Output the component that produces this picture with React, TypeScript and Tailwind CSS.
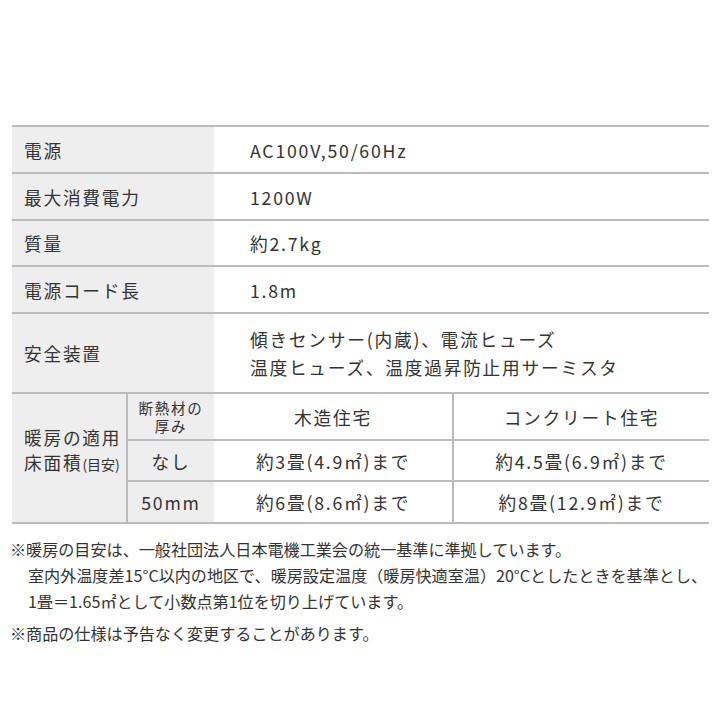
import React from "react";

const font = { fontFamily: '"Noto Sans CJK JP", "Noto Sans", sans-serif' };

function Row({ label, children, h }: { label: string; children: React.ReactNode; h: string }) {
  return (
    <div className={`flex border-b-2 border-[#bcbcbc] ${h}`}>
      <div className="w-[202px] shrink-0 bg-[#eeeeee] flex items-center pl-[12px]">{label}</div>
      <div className="flex-1 flex flex-col justify-center pl-[36px]">{children}</div>
    </div>
  );
}

export default function App() {
  return (
    <div className="w-[720px] h-[720px] bg-white text-[#333333] overflow-hidden" style={font}>
      <div className="pt-[125px] pl-[12px]">
        <div className="w-[697px] border-t-2 border-[#bcbcbc] text-[17.7px] tracking-[0.1em] leading-[28px]">
          <Row label="電源" h="h-[47px]">AC100V,50/60Hz</Row>
          <Row label="最大消費電力" h="h-[47px]">1200W</Row>
          <Row label="質量" h="h-[46px]">約2.7kg</Row>
          <Row label="電源コード長" h="h-[47px]">1.8m</Row>
          <Row label="安全装置" h="h-[80px]">
            <div>傾きセンサー(内蔵)、電流ヒューズ</div>
            <div>温度ヒューズ、温度過昇防止用サーミスタ</div>
          </Row>
          <div className="flex border-b-2 border-[#bcbcbc] h-[130px]">
            <div className="w-[116px] shrink-0 bg-[#eeeeee] border-r-2 border-[#bcbcbc] flex flex-col justify-center pl-[12px] pb-[14px] leading-[25px]">
              <div>暖房の適用</div>
              <div>
                床面積<span className="text-[14px] tracking-normal">(目安)</span>
              </div>
            </div>
            <div className="flex-1 flex flex-col">
              <div className="flex h-[47px] border-b-2 border-[#bcbcbc]">
                <div className="w-[86px] shrink-0 bg-[#eeeeee] flex flex-col items-center justify-center text-[14.5px] leading-[18px]">
                  <div className="leading-[18px]">断熱材の</div>
                  <div className="leading-[18px]">厚み</div>
                </div>
                <div className="w-[240px] shrink-0 border-r-2 border-[#bcbcbc] flex items-center justify-center">木造住宅</div>
                <div className="flex-1 flex items-center justify-center">コンクリート住宅</div>
              </div>
              <div className="flex h-[41px] border-b-2 border-[#bcbcbc]">
                <div className="w-[86px] shrink-0 bg-[#eeeeee] flex items-center justify-center">なし</div>
                <div className="w-[240px] shrink-0 border-r-2 border-[#bcbcbc] flex items-center justify-center">約3畳(4.9㎡)まで</div>
                <div className="flex-1 flex items-center justify-center">約4.5畳(6.9㎡)まで</div>
              </div>
              <div className="flex flex-1">
                <div className="w-[86px] shrink-0 bg-[#eeeeee] flex items-center justify-center">50mm</div>
                <div className="w-[240px] shrink-0 border-r-2 border-[#bcbcbc] flex items-center justify-center">約6畳(8.6㎡)まで</div>
                <div className="flex-1 flex items-center justify-center">約8畳(12.9㎡)まで</div>
              </div>
            </div>
          </div>
        </div>
      </div>
      <div className="pl-[10px] mt-[12px] text-[16.1px] leading-[26px] whitespace-nowrap">
        <div>※暖房の目安は、一般社団法人日本電機工業会の統一基準に準拠しています。</div>
        <div className="pl-[18px]">室内外温度差15°C以内の地区で、暖房設定温度（暖房快適室温）20°Cとしたときを基準とし、</div>
        <div className="pl-[18px]">1畳＝1.65㎡として小数点第1位を切り上げています。</div>
        <div className="mt-[6px]">※商品の仕様は予告なく変更することがあります。</div>
      </div>
    </div>
  );
}
